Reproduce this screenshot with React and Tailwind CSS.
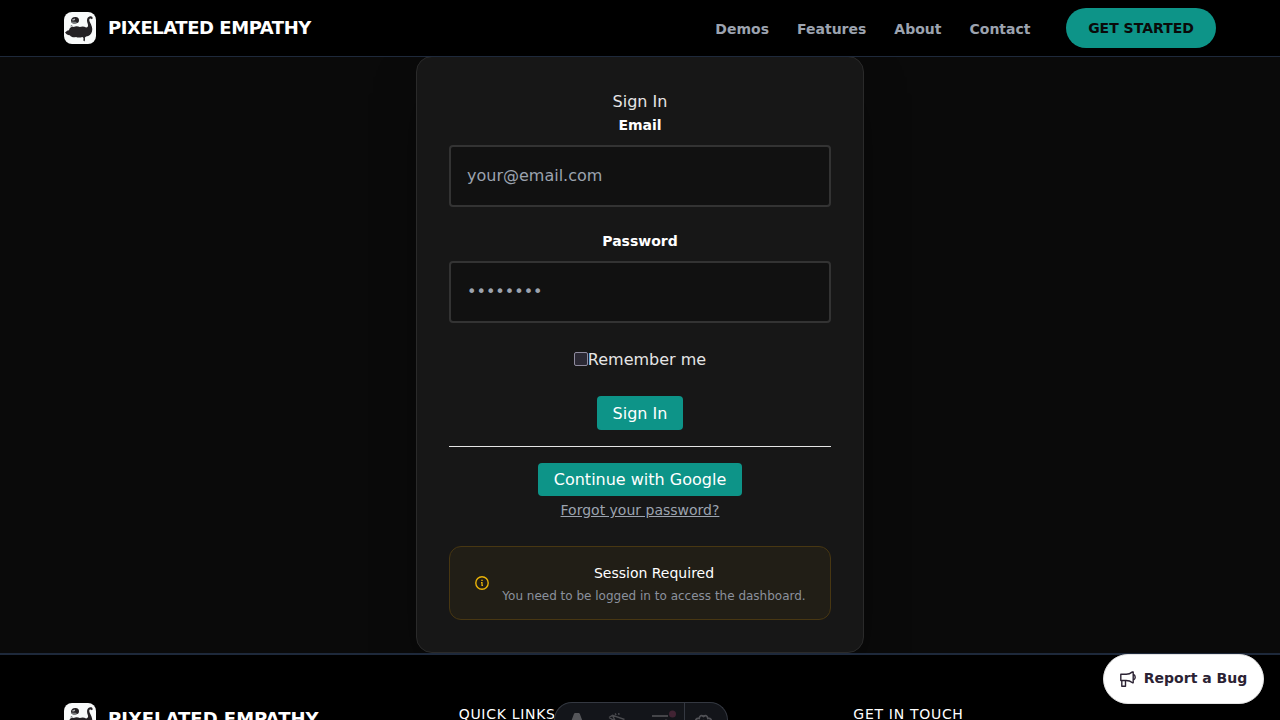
function Logo() {
  return (
    <svg viewBox="0 0 32 32" className="size-8 shrink-0 rounded-lg bg-[#f8fafa]">
      <path
        d="M.9 20.6 3.6 18.4 5 18.3c.4-2.4 2.2-3.8 4.6-3.4 2-1 4.4-1 6.2.2 2.1-1 4.5-.8 6.3.5 1.6-.5 2.5-1.6 1.7-3.7-1.4-3.4-.8-6.4 1.6-7.3 1.9-.7 3.4 0 3.2 1.9l-.7.8-1.2-.9c-1.6-.2-1.8 1.3-.9 3.5 1.6 3.2 3.2 6 2.2 9.7-.9 3-2.8 4.7-5.9 5l-1.2.8.1 2.9-.8 1.2-.8-1.1.1-2.4-1-1c-2.4.7-4.5.9-6.5.1-2.6.5-4.8.1-6.2-1.9-1.9.1-3.4-.5-4.6-2.6z"
        fill="#242124"
      />
      <path d="M7 8.8c0-2.7 1.9-4 4.6-3.8 2.3 0 3.6 1.2 3.4 3.6-.1 2.2-1.5 3-4 3-2.6 0-4-.7-4-2.8z" fill="#242124" />
      <path d="m8.1 7.6 2.9-1 .1 1.3-2.5.8z" fill="#aeb0b2" />
      <path d="m7.2 9.5 5 .2.6 1.3-2 .7-3-.7z" fill="#77797b" />
      <path d="m6 14.2 1.8-1.2 1.1 1.5z" fill="#66686a" />
    </svg>
  );
}

function Field({ label, type, placeholder }) {
  return (
    <label className="mb-6 flex flex-col">
      <span className="mb-2 text-center text-sm leading-6 font-semibold text-white">{label}</span>
      <input
        type={type}
        placeholder={placeholder}
        className="h-[62px] w-full rounded border-2 border-[#333333] bg-[#111111] px-4 pb-0.5 text-base text-white placeholder:text-[#9ca3af]"
      />
    </label>
  );
}

function DevToolbar() {
  return (
    <div className="absolute bottom-0 left-[554px] h-[18px] w-[174px] overflow-hidden rounded-t-[20px] border border-b-0 border-[#343841] bg-[#13151a]">
      <svg className="h-[40px] w-[172px]" viewBox="0 0 172 40" fill="none">
        <path d="M15 21.5 19 10.8q.4-.8 1.2-.8h3.4q.8 0 1.2.8l4 10.7-4.6-1.2-2.2-7.2-2.2 7.2z" fill="#55565a" />
        <path d="M19.4 13h5l2 7h-9z" fill="#55565a" />
        <path d="m54 14.5 3.5-2.2 12 4.2M57.5 12.5l4 8M54 14.5l6 3.5M60 10.5l1.2 1.4M63.7 10l.3 1.9" stroke="#4a4b4f" strokeWidth="1.4" />
        <path d="M97 13h16M97 19h16" stroke="#55565a" strokeWidth="1.7" />
        <circle cx="111" cy="18" r="1.6" fill="#55565a" />
        <circle cx="117.5" cy="11" r="3.5" fill="#412333" />
        <path d="M129.5 0v40" stroke="#343841" />
        <path d="M141.2 19.5c-1.3-2.5.2-4.7 3-4 .4-3 2.2-3.7 4.3-2 2.1-1.7 3.9-1 4.3 2 2.8-.7 4.3 1.5 3 4M145.3 19.5c1.3-2.4 5.1-2.4 6.4 0" stroke="#505156" strokeWidth="1.7" />
      </svg>
    </div>
  );
}

export default function App() {
  return (
    <div className="relative flex h-screen flex-col overflow-hidden bg-[#0a0a0a] font-['DejaVu_Sans',sans-serif] text-[#e5e5e5]">
      <header className="relative z-10 -mb-px flex h-[57px] shrink-0 items-center justify-between border-b border-[#1e293b] bg-black px-16">
        <div className="flex items-center gap-3">
          <Logo />
          <span className="text-lg leading-7 font-bold tracking-tight text-white">PIXELATED EMPATHY</span>
        </div>
        <div className="flex items-center gap-[35.5px]">
          <nav className="flex gap-7 pt-0.5 text-sm font-semibold text-[#9ca3af]">
            <a>Demos</a>
            <a>Features</a>
            <a>About</a>
            <a>Contact</a>
          </nav>
          <button className="h-10 w-[150px] rounded-full bg-[#0d9488] text-sm font-bold whitespace-nowrap text-[#0a0a0a]">
            GET STARTED
          </button>
        </div>
      </header>

      <main className="flex shrink-0 justify-center">
        <section className="flex h-[597px] w-[448px] flex-col rounded-2xl border border-[#2a2a2a] bg-[#171717] p-8 shadow-[0_25px_50px_-12px_rgba(0,0,0,0.5)]">
          <h1 className="h-6 text-center text-base leading-[26px]">Sign In</h1>
          <form className="flex flex-col">
            <Field label="Email" type="email" placeholder="your@email.com" />
            <div className="-mt-0.5">
              <Field label="Password" type="password" placeholder="••••••••" />
            </div>
            <label className="flex h-6 items-center justify-center text-base">
              <input type="checkbox" className="size-3.5 appearance-none rounded-[2px] border border-[#8f8b9e] bg-[#2b2934]" />
              <span className="pt-0.5">Remember me</span>
            </label>
            <button type="button" className="mt-[25px] h-[34px] self-center rounded bg-[#0d9488] px-4 pt-0.5 text-base text-white">
              Sign In
            </button>
          </form>
          <hr className="my-4 border-t border-[#e5e5e5]" />
          <button className="h-[33px] self-center rounded bg-[#0d9488] px-4 text-base text-white">Continue with Google</button>
          <a className="mt-1 self-center text-sm text-[#9ca3af] underline">Forgot your password?</a>
          <div className="mt-auto flex h-[74px] items-center justify-center gap-3 rounded-xl border border-[#483712] bg-[#211e16]">
            <svg className="size-4 shrink-0" viewBox="0 0 16 16" fill="none" stroke="#eab308" strokeWidth="1.4">
              <circle cx="8" cy="8" r="6.2" />
              <path d="M7 7.7h1v2.7h1M7.3 5.4h1.4" strokeWidth="1.2" />
            </svg>
            <div className="pt-[3px] text-center">
              <p className="mb-[3px] text-sm text-white">Session Required</p>
              <p className="text-xs leading-5 text-[#8b919d]">You need to be logged in to access the dashboard.</p>
            </div>
          </div>
        </section>
      </main>

      <footer className="relative h-40 shrink-0 border-t-2 border-[#1e293b] bg-black px-16 pt-12">
        <div className="grid grid-cols-3 gap-x-[11px]">
          <div className="flex items-center gap-3">
            <Logo />
            <span className="text-lg leading-7 font-bold text-white">PIXELATED EMPATHY</span>
          </div>
          <h2 className="pl-[7px] text-sm leading-[22px] tracking-wider whitespace-nowrap text-white">QUICK LINKS</h2>
          <h2 className="pl-[14px] text-sm leading-[22px] tracking-wider text-white">GET IN TOUCH</h2>
        </div>
      </footer>

      <DevToolbar />

      <button className="absolute right-4 bottom-4 z-20 flex h-[50px] w-[161px] items-center justify-center gap-2 rounded-full border border-[#e3e3e3] bg-white text-sm font-semibold whitespace-nowrap text-[#2b2233] shadow-lg">
        <svg className="size-4 shrink-0" viewBox="0 0 16 16" fill="none" stroke="#2b2233" strokeWidth="1.4" strokeLinejoin="round">
          <path d="M.8 3.3h5.4c2.6 0 4.5-1 6.3-2.4h.7v10.8h-.7c-1.8-1.4-3.7-2.2-6.3-2.2H.8zM1.8 9.6v5.6h3.7V9.6M13.2 3.2c2.7 1.4 2.7 4.8 0 6.2" />
        </svg>
        <span className="pb-0.5">Report a Bug</span>
      </button>
    </div>
  );
}
